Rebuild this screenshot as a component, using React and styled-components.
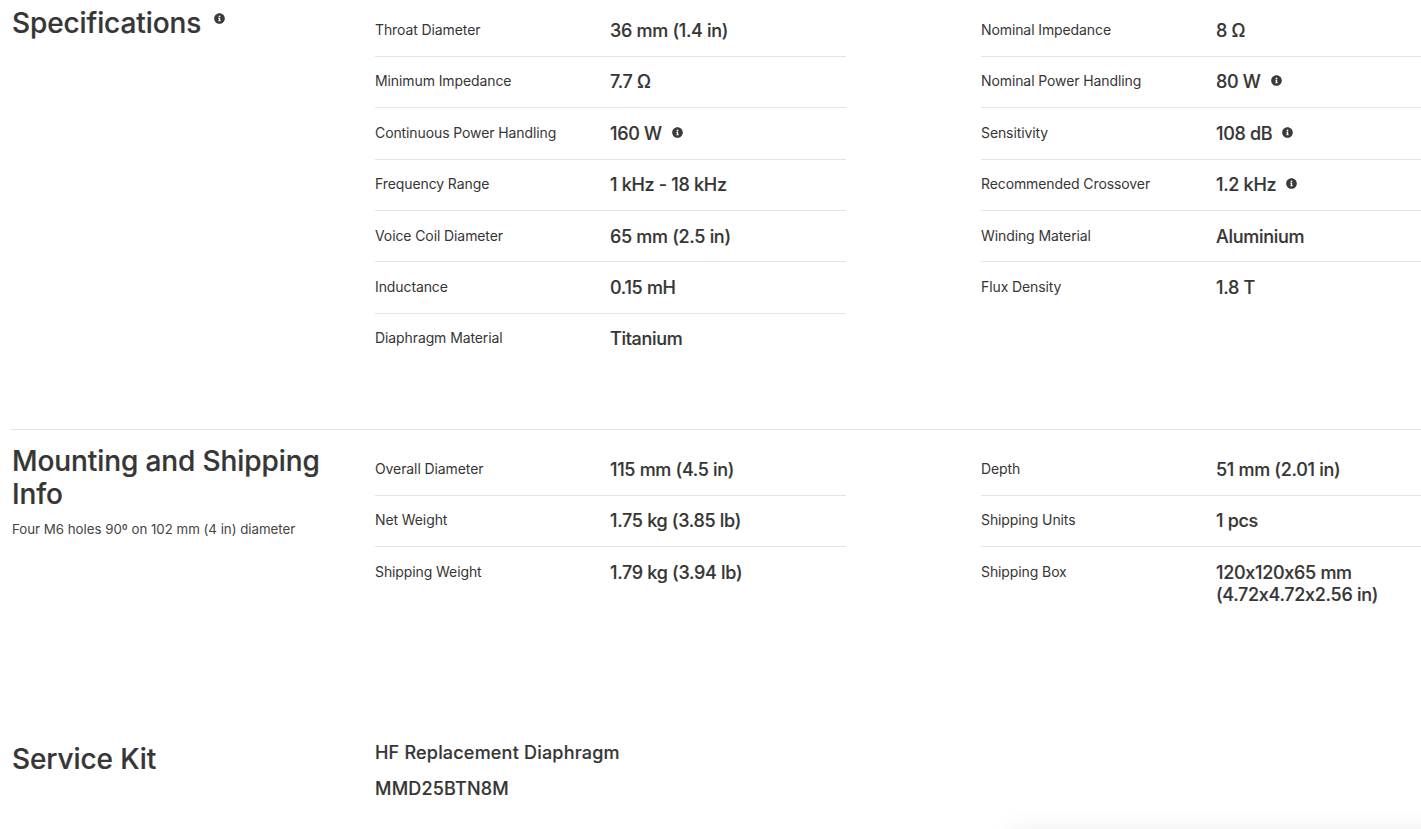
import React from "react";
import styled, { createGlobalStyle } from "styled-components";
import { FaInfoCircle } from "react-icons/fa";

const specsLeft = [
  { label: "Throat Diameter", value: "36 mm (1.4 in)" },
  { label: "Minimum Impedance", value: "7.7 Ω" },
  { label: "Continuous Power Handling", value: "160 W", info: true },
  { label: "Frequency Range", value: "1 kHz - 18 kHz" },
  { label: "Voice Coil Diameter", value: "65 mm (2.5 in)" },
  { label: "Inductance", value: "0.15 mH" },
  { label: "Diaphragm Material", value: "Titanium" },
];

const specsRight = [
  { label: "Nominal Impedance", value: "8 Ω" },
  { label: "Nominal Power Handling", value: "80 W", info: true },
  { label: "Sensitivity", value: "108 dB", info: true },
  { label: "Recommended Crossover", value: "1.2 kHz", info: true },
  { label: "Winding Material", value: "Aluminium" },
  { label: "Flux Density", value: "1.8 T" },
];

const mountLeft = [
  { label: "Overall Diameter", value: "115 mm (4.5 in)" },
  { label: "Net Weight", value: "1.75 kg (3.85 lb)" },
  { label: "Shipping Weight", value: "1.79 kg (3.94 lb)" },
];

const mountRight = [
  { label: "Depth", value: "51 mm (2.01 in)" },
  { label: "Shipping Units", value: "1 pcs" },
  { label: "Shipping Box", value: "120x120x65 mm (4.72x4.72x2.56 in)" },
];

const SpecTable = ({ rows }) => (
  <Table>
    {rows.map((row) => (
      <Row key={row.label}>
        <Label>{row.label}</Label>
        <Value>
          {row.info ? <span>{row.value}</span> : row.value}
          {row.info && <InfoIcon />}
        </Value>
      </Row>
    ))}
  </Table>
);

export default function App() {
  return (
    <Page>
      <GlobalStyle />
      <Section $height={429} $top={5.5}>
        <Side>
          <Heading $offset={1}>
            Specifications
            <HeadingInfo />
          </Heading>
        </Side>
        <Tables>
          <SpecTable rows={specsLeft} />
          <SpecTable rows={specsRight} />
        </Tables>
      </Section>
      <Section $height={300} $top={14.6} $divided>
        <Side>
          <Heading $offset={0.4}>Mounting and Shipping Info</Heading>
          <Note>Four M6 holes 90º on 102 mm (4 in) diameter</Note>
        </Side>
        <Tables>
          <SpecTable rows={mountLeft} />
          <SpecTable rows={mountRight} />
        </Tables>
      </Section>
      <Section $height={100} $top={12.5}>
        <Side>
          <Heading $offset={1.5}>Service Kit</Heading>
        </Side>
        <Kit>
          <KitLine>HF Replacement Diaphragm</KitLine>
          <KitLine>MMD25BTN8M</KitLine>
        </Kit>
      </Section>
      <CornerShadow />
    </Page>
  );
}

const GlobalStyle = createGlobalStyle`
  html, body {
    margin: 0;
    padding: 0;
    background: #fff;
    overflow: hidden;
  }
`;

const Page = styled.div`
  position: relative;
  width: 1421px;
  height: 829px;
  overflow: hidden;
  padding-left: 11px;
  box-sizing: border-box;
  font-family: Inter, "Liberation Sans", sans-serif;
  color: #363636;
`;

const Section = styled.section`
  display: grid;
  grid-template-columns: 364px 1fr;
  height: ${(p) => p.$height}px;
  padding-top: ${(p) => p.$top}px;
  box-sizing: border-box;
  border-top: ${(p) => (p.$divided ? "1px solid #e4e4e4" : "none")};
`;

const Side = styled.div`
  padding-left: 1px;
`;

const Heading = styled.h2`
  margin: ${(p) => p.$offset || 0}px 0 0;
  width: 330px;
  font-size: 28px;
  line-height: 33px;
  font-weight: 500;
  letter-spacing: -0.1px;
  -webkit-text-stroke: 0.2px #363636;
  color: #363636;
`;

const HeadingInfo = styled(FaInfoCircle)`
  width: 11px;
  height: 11px;
  margin-left: 13px;
  vertical-align: 9px;
  color: #3a3a3a;
`;

const Note = styled.p`
  margin: 9px 0 0;
  font-size: 13.3px;
  line-height: 18px;
  letter-spacing: -0.02px;
  color: #444;
`;

const Tables = styled.div`
  display: grid;
  grid-template-columns: 471px 440px;
  column-gap: 135px;
  align-items: start;
`;

const Table = styled.div`
  display: flex;
  flex-direction: column;
`;

const Row = styled.div`
  display: grid;
  grid-template-columns: 235px 1fr;
  align-items: start;
  padding: 14.5px 0 13.9px;
  min-height: 22px;
  border-bottom: 1px solid #e4e4e4;
  &:last-child {
    border-bottom: none;
  }
`;

const Label = styled.div`
  font-size: 14px;
  line-height: 20px;
  letter-spacing: -0.1px;
  color: #363636;
`;

const Value = styled.div`
  display: flex;
  align-items: center;
  max-width: 170px;
  font-size: 18px;
  line-height: 22px;
  font-weight: 500;
  letter-spacing: -0.3px;
  -webkit-text-stroke: 0.15px #363636;
  color: #363636;
`;

const InfoIcon = styled(FaInfoCircle)`
  flex: none;
  width: 11px;
  height: 11px;
  margin: -3px 0 0 10px;
  color: #3a3a3a;
`;

const Kit = styled.div`
  display: flex;
  flex-direction: column;
  gap: 14px;
`;

const KitLine = styled.div`
  font-size: 18px;
  line-height: 22px;
  font-weight: 500;
  letter-spacing: 0.2px;
  -webkit-text-stroke: 0.15px #363636;
  color: #363636;
`;

const CornerShadow = styled.div`
  position: absolute;
  left: 1010px;
  right: -40px;
  top: 838px;
  height: 60px;
  box-shadow: 0 0 30px rgba(0, 0, 0, 0.14);
`;
